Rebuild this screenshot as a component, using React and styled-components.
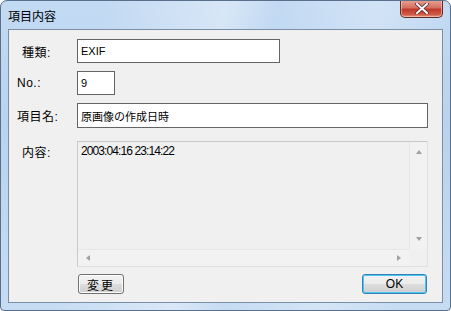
import styled, { createGlobalStyle } from "styled-components";

const GlobalStyle = createGlobalStyle`
  html, body {
    margin: 0;
    padding: 0;
    background: #ffffff;
  }
  body {
    font-family: "Liberation Sans", "Noto Sans CJK JP", sans-serif;
    font-size: 12px;
    color: #000;
  }
`;

const App = () => {
  return (
    <>
      <GlobalStyle />
      <Window>
        <TitleBar>
          <Title>項目内容</Title>
          <CloseButton>
            <svg width="14" height="11" viewBox="0 0 14 11">
              <path
                d="M2 1 L12 10 M12 1 L2 10"
                stroke="#5a2a2a"
                strokeWidth="3.6"
                strokeLinecap="square"
              />
              <path
                d="M2 1 L12 10 M12 1 L2 10"
                stroke="#ffffff"
                strokeWidth="2"
                strokeLinecap="square"
              />
            </svg>
          </CloseButton>
        </TitleBar>
        <Client>
          <Row $mt={9}>
            <Label $indent={13}>種類:</Label>
            <Field $w={203}>EXIF</Field>
          </Row>
          <Row $mt={8}>
            <Label $indent={8}>No.:</Label>
            <Field $w={38}>9</Field>
          </Row>
          <Row $mt={8}>
            <Label $indent={8}>項目名:</Label>
            <Field $w={351} $h={25}>原画像の作成日時</Field>
          </Row>
          <Row $mt={13} $top>
            <Label $indent={13} $pt={2}>内容:</Label>
            <Memo>
              <MemoBody>
                <MemoText>2003:04:16 23:14:22</MemoText>
                <VScroll>
                  <Arrow $dir="up" />
                  <Arrow $dir="down" />
                </VScroll>
              </MemoBody>
              <HScrollRow>
                <HScroll>
                  <Arrow $dir="left" />
                  <Arrow $dir="right" />
                </HScroll>
                <Corner />
              </HScrollRow>
            </Memo>
          </Row>
          <ButtonRow>
            <Button $w={46}>変更</Button>
            <Button $w={65} $default>OK</Button>
          </ButtonRow>
        </Client>
      </Window>
    </>
  );
};

export default App;

const Window = styled.div`
  width: 451px;
  height: 311px;
  box-sizing: border-box;
  display: flex;
  flex-direction: column;
  border: 1px solid #58708c;
  border-radius: 7px 7px 4px 4px;
  background: linear-gradient(
      100deg,
      rgba(255, 255, 255, 0) 20%,
      rgba(255, 255, 255, 0.35) 45%,
      rgba(255, 255, 255, 0) 55%,
      rgba(255, 255, 255, 0.25) 75%,
      rgba(255, 255, 255, 0) 90%
    ),
    linear-gradient(180deg, #c3daf3 0%, #b9d3ee 40%, #c6dcf3 100%);
  overflow: hidden;
`;

const TitleBar = styled.div`
  height: 28px;
  display: flex;
  align-items: flex-start;
  justify-content: space-between;
  padding-left: 7px;
  padding-right: 7px;
`;

const Title = styled.div`
  font-family: "Noto Sans CJK JP", sans-serif;
  font-size: 12px;
  line-height: 12px;
  margin-top: 9px;
  color: #000;
`;

const CloseButton = styled.div`
  width: 43px;
  height: 18px;
  margin-top: -1px;
  box-sizing: border-box;
  border: 1px solid #5d2a26;
  border-top: none;
  border-radius: 0 0 5px 5px;
  background: linear-gradient(
    180deg,
    #e8a395 0%,
    #d4705f 45%,
    #c0392b 55%,
    #cf5a45 85%,
    #e6987f 100%
  );
  display: flex;
  align-items: center;
  justify-content: center;
  box-shadow: inset 0 0 0 1px rgba(255, 220, 210, 0.5);
`;

const Client = styled.div`
  flex: 1;
  margin: 0 7px 7px 7px;
  border: 1px solid #7a8ea6;
  background: #f0f0f0;
  display: flex;
  flex-direction: column;
`;

const Row = styled.div`
  display: flex;
  align-items: ${(p) => (p.$top ? "flex-start" : "center")};
  margin-top: ${(p) => p.$mt}px;
`;

const Label = styled.div`
  width: 68px;
  box-sizing: border-box;
  padding-left: ${(p) => p.$indent}px;
  padding-top: ${(p) => p.$pt || 0}px;
  font-family: "Liberation Sans", "Noto Sans CJK JP", sans-serif;
  font-size: 12px;
  letter-spacing: 0.5px;
`;

const Field = styled.div`
  width: ${(p) => p.$w}px;
  height: ${(p) => p.$h || 24}px;
  box-sizing: border-box;
  border: 1px solid #646464;
  background: #ffffff;
  padding-left: 3px;
  display: flex;
  align-items: center;
  font-family: "Liberation Sans", "Noto Sans CJK JP", sans-serif;
  font-size: 11px;
`;

const Memo = styled.div`
  width: 351px;
  height: 126px;
  box-sizing: border-box;
  border: 1px solid #c8c8c8;
  border-right-color: #e0e0e0;
  border-bottom-color: #e0e0e0;
  background: #f0f0f0;
  display: flex;
  flex-direction: column;
`;

const MemoBody = styled.div`
  flex: 1;
  display: flex;
`;

const MemoText = styled.div`
  flex: 1;
  padding: 2px 0 0 3px;
  font-family: "Liberation Sans", sans-serif;
  font-size: 12px;
  letter-spacing: -0.9px;
  line-height: 14px;
`;

const VScroll = styled.div`
  width: 17px;
  border-left: 1px solid #e6e6e6;
  background: #f2f2f2;
  display: flex;
  flex-direction: column;
  justify-content: space-between;
  align-items: center;
  padding: 8px 0 8px;
`;

const HScrollRow = styled.div`
  height: 17px;
  display: flex;
`;

const HScroll = styled.div`
  flex: 1;
  border-top: 1px solid #e6e6e6;
  background: #f2f2f2;
  display: flex;
  justify-content: space-between;
  align-items: center;
  padding: 0 8px;
`;

const Corner = styled.div`
  width: 18px;
  background: #f0f0f0;
`;

const Arrow = styled.div`
  width: 0;
  height: 0;
  border-style: solid;
  ${(p) =>
    p.$dir === "up"
      ? "border-width: 0 3.5px 4px 3.5px; border-color: transparent transparent #a0a0a0 transparent;"
      : p.$dir === "down"
      ? "border-width: 4px 3.5px 0 3.5px; border-color: #a0a0a0 transparent transparent transparent;"
      : p.$dir === "left"
      ? "border-width: 3.5px 4px 3.5px 0; border-color: transparent #a0a0a0 transparent transparent;"
      : "border-width: 3.5px 0 3.5px 4px; border-color: transparent transparent transparent #a0a0a0;"}
`;

const ButtonRow = styled.div`
  display: flex;
  justify-content: space-between;
  margin: 7px 15px 0 69px;
`;

const Button = styled.div`
  width: ${(p) => p.$w}px;
  height: 20px;
  box-sizing: border-box;
  border: 1px solid ${(p) => (p.$default ? "#3c7fb1" : "#707070")};
  border-radius: 3px;
  background: linear-gradient(180deg, #f2f2f2 0%, #ebebeb 50%, #dddddd 51%, #cfcfcf 100%);
  box-shadow: inset 0 0 0 1px ${(p) => (p.$default ? "#48c6f5" : "#fcfcfc")};
  display: flex;
  align-items: center;
  justify-content: center;
  font-family: "Liberation Sans", "Noto Sans CJK JP", sans-serif;
  font-size: 12px;
  letter-spacing: ${(p) => (p.$default ? "0" : "2px")};
`;
